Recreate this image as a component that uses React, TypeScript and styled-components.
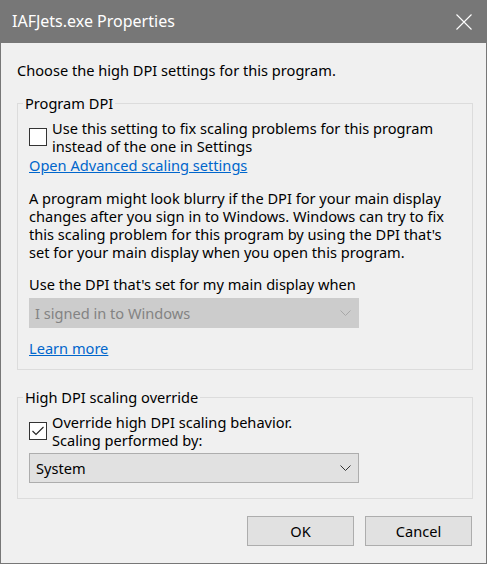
import React from "react";
import styled, { createGlobalStyle } from "styled-components";

const Global = createGlobalStyle`
  html, body { margin: 0; padding: 0; }
  body {
    width: 487px;
    height: 564px;
    overflow: hidden;
    background: #f0f0f0;
    font-family: "Noto Sans", "Open Sans", sans-serif;
  }
  * { box-sizing: border-box; }
`;

const Window = styled.div`
  width: 487px;
  height: 564px;
  display: flex;
  flex-direction: column;
  background: #f0f0f0;
  border: 1px solid #777777;
  border-top: none;
  font-size: 14.6px;
  line-height: 18px;
  color: #000;
`;

const TitleBar = styled.div`
  height: 43px;
  flex: 0 0 43px;
  margin: 0 -1px;
  background: #777777;
  display: flex;
  align-items: center;
  justify-content: space-between;
  padding: 0 15px 0 12px;
`;

const Title = styled.div`
  color: #ffffff;
  font-size: 16px;
  line-height: 20px;
  margin-top: -1px;
`;

const CloseIcon = styled.svg`
  width: 16px;
  height: 16px;
  display: block;
`;

const Body = styled.div`
  display: flex;
  flex-direction: column;
  padding: 18px 13px 0 16px;
`;

const Intro = styled.div`
  margin-left: 0;
`;

const Group = styled.fieldset<{ $top: number; $pt: number; $pb: number }>`
  margin: ${(p) => p.$top}px 0 0 0;
  padding: ${(p) => p.$pt}px 12px ${(p) => p.$pb}px 11px;
  border: 1px solid #dcdcdc;
  min-width: 0;
  display: flex;
  flex-direction: column;
`;

const Legend = styled.legend`
  padding: 0 2px;
  margin-left: -6px;
  line-height: 18px;
`;

const CheckRow = styled.label`
  display: flex;
  align-items: center;
  gap: 5px;
`;

const Box = styled.span`
  width: 18px;
  height: 18px;
  flex: 0 0 18px;
  border: 1px solid #333333;
  background: #ffffff;
  display: flex;
  align-items: center;
  justify-content: center;
`;

const CheckText = styled.span`
  display: block;
`;

const Link = styled.a<{ $mt: number }>`
  display: block;
  align-self: flex-start;
  margin-top: ${(p) => p.$mt}px;
  color: #0066cc;
  text-decoration: underline;
  cursor: pointer;
`;

const Para = styled.p<{ $mt: number }>`
  margin: ${(p) => p.$mt}px 0 0 0;
`;

const Combo = styled.div<{ $disabled?: boolean; $mt: number }>`
  margin-top: ${(p) => p.$mt}px;
  width: 330px;
  height: 30px;
  display: flex;
  align-items: center;
  justify-content: space-between;
  padding: 0 7px 0 ${(p) => (p.$disabled ? 5 : 6)}px;
  background: ${(p) => (p.$disabled ? "#cccccc" : "#e1e1e1")};
  border: 1px solid ${(p) => (p.$disabled ? "#cccccc" : "#adadad")};
  color: ${(p) => (p.$disabled ? "#838383" : "#000000")};
`;

const Chevron = styled.svg`
  width: 11px;
  height: 6px;
  display: block;
`;

const Buttons = styled.div`
  display: flex;
  justify-content: flex-end;
  gap: 11px;
  margin-top: 17px;
  padding-right: 1px;
`;

const Button = styled.button`
  width: 107px;
  height: 30px;
  background: #e1e1e1;
  border: 1px solid #adadad;
  font: inherit;
  color: #000;
  padding: 0;
`;

function ChevronDown({ color }: { color: string }) {
  return (
    <Chevron viewBox="0 0 11 6">
      <path d="M0.5 0.5 L5.5 5.5 L10.5 0.5" fill="none" stroke={color} strokeWidth="1" />
    </Chevron>
  );
}

export default function App() {
  return (
    <>
      <Global />
      <Window>
        <TitleBar>
          <Title>IAFJets.exe Properties</Title>
          <CloseIcon viewBox="0 0 16 16">
            <path d="M0.5 0.5 L15.5 15.5 M15.5 0.5 L0.5 15.5" stroke="#ffffff" strokeWidth="1.1" fill="none" />
          </CloseIcon>
        </TitleBar>
        <Body>
          <Intro>Choose the high DPI settings for this program.</Intro>
          <Group $top={15} $pt={7} $pb={12}>
            <Legend>Program DPI</Legend>
            <CheckRow>
              <Box />
              <CheckText>
                Use this setting to fix scaling problems for this program
                <br />
                instead of the one in Settings
              </CheckText>
            </CheckRow>
            <Link $mt={1}>Open Advanced scaling settings</Link>
            <Para $mt={15}>
              A program might look blurry if the DPI for your main display
              <br />
              changes after you sign in to Windows. Windows can try to fix
              <br />
              this scaling problem for this program by using the DPI that's
              <br />
              set for your main display when you open this program.
            </Para>
            <Para $mt={14}>Use the DPI that's set for my main display when</Para>
            <Combo $disabled $mt={5}>
              <span>I signed in to Windows</span>
              <ChevronDown color="#a8a8a8" />
            </Combo>
            <Link $mt={11}>Learn more</Link>
          </Group>
          <Group $top={18} $pt={7} $pb={15}>
            <Legend>High DPI scaling override</Legend>
            <CheckRow>
              <Box>
                <svg width="14" height="14" viewBox="0 0 14 14">
                  <path d="M1.5 7 L5 10.5 L12.5 3" fill="none" stroke="#222" strokeWidth="1.1" />
                </svg>
              </Box>
              <CheckText>
                Override high DPI scaling behavior.
                <br />
                Scaling performed by:
              </CheckText>
            </CheckRow>
            <Combo $mt={4}>
              <span>System</span>
              <ChevronDown color="#333333" />
            </Combo>
          </Group>
          <Buttons>
            <Button>OK</Button>
            <Button>Cancel</Button>
          </Buttons>
        </Body>
      </Window>
    </>
  );
}
